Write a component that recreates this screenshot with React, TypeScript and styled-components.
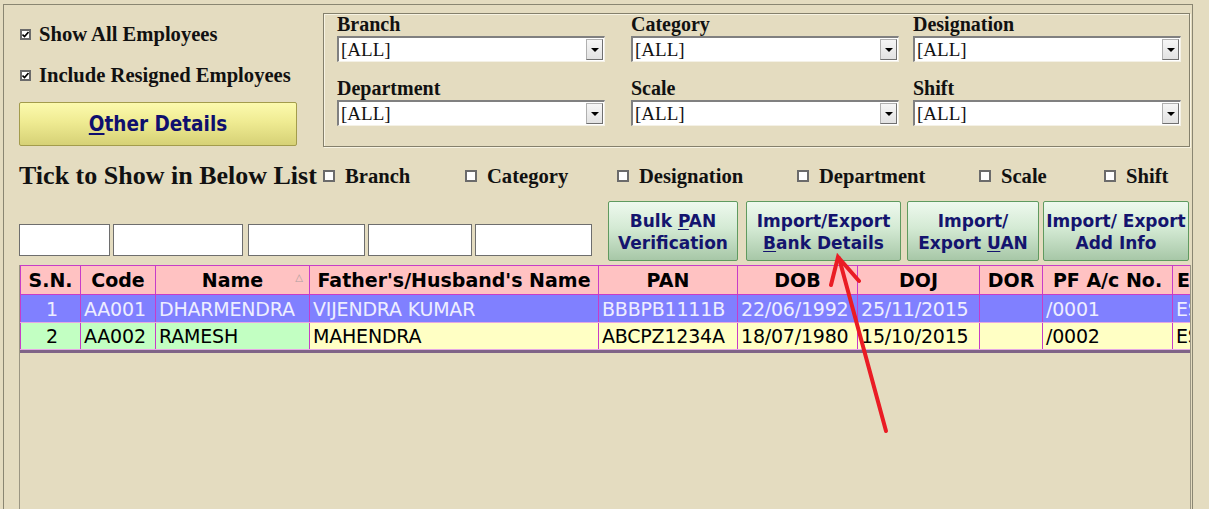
import React from "react";
import styled, { createGlobalStyle } from "styled-components";

const GlobalStyle = createGlobalStyle`
  html, body { margin: 0; padding: 0; background: #e4dcc0; overflow: hidden; }
  * { box-sizing: border-box; }
`;

const Page = styled.div`
  position: relative;
  width: 1209px;
  height: 509px;
  overflow: hidden;
  background: #e4dcc0;
`;

const Frame = styled.div`
  margin: 4px 0 0 3px;
  width: 1190px;
  height: 520px;
  border: 1px solid #8a8672;
  border-bottom: none;
`;

const TopSection = styled.div`
  display: flex;
  align-items: flex-start;
  padding-top: 8px;
`;

const LeftColumn = styled.div`
  margin-left: 15px;
  width: 278px;
  padding-top: 10px;
  display: flex;
  flex-direction: column;
`;

const CheckRow = styled.label<{ $gap?: number }>`
  display: flex;
  align-items: center;
  height: 22px;
  margin-top: ${(p) => p.$gap ?? 0}px;
  font-family: "Liberation Serif", "Times New Roman", serif;
  font-weight: bold;
  font-size: 20.6px;
  color: #111;
  white-space: nowrap;
`;

const Box = styled.span<{ $size?: number }>`
  display: inline-flex;
  align-items: center;
  justify-content: center;
  width: ${(p) => p.$size ?? 11}px;
  height: ${(p) => p.$size ?? 11}px;
  border: 2px solid #6b6b6b;
  background: #ffffff;
  margin-left: 1px;
  margin-right: 8px;
  flex-shrink: 0;
`;

const YellowButton = styled.button`
  margin-top: 16px;
  width: 278px;
  height: 44px;
  border: 1px solid #a39c4c;
  border-radius: 2px;
  background: linear-gradient(#fcfaae, #efeb92 45%, #d6d176);
  font-family: "DejaVu Sans Condensed", "DejaVu Sans", sans-serif;
  font-weight: bold;
  font-size: 20.5px;
  color: #0f0f6e;
  padding: 0;
  u { text-decoration: underline; text-underline-offset: 2px; }
`;

const GroupBox = styled.div`
  margin-left: 26px;
  width: 867px;
  height: 134px;
  border: 1px solid #84806c;
  box-shadow: inset 1px 1px 0 #f7f3e2, 1px 1px 0 #f7f3e2;
  padding: 0 0 0 13px;
  display: grid;
  grid-template-columns: 294px 282px 268px;
  grid-auto-rows: 48px;
  row-gap: 16px;
`;

const Field = styled.div`
  display: flex;
  flex-direction: column;
`;

const FieldLabel = styled.div`
  height: 22px;
  line-height: 20px;
  font-family: "Liberation Serif", "Times New Roman", serif;
  font-weight: bold;
  font-size: 20px;
  color: #111;
`;

const SelectBox = styled.div`
  position: relative;
  width: 268px;
  height: 26px;
  background: #fff;
  border-top: 2px solid #808080;
  border-left: 2px solid #808080;
  border-bottom: 1px solid #f4f1e6;
  border-right: 1px solid #f4f1e6;
  font-family: "Liberation Serif", "Times New Roman", serif;
  font-size: 19px;
  line-height: 23px;
  padding-left: 2px;
  color: #111;
`;

const DropButton = styled.span`
  position: absolute;
  right: 1px;
  top: 1px;
  width: 17px;
  height: 21px;
  background: linear-gradient(#f6f6f6, #e2e2e2);
  border: 1px solid #b0b0b0;
  border-right-color: #707070;
  border-bottom-color: #707070;
  display: flex;
  align-items: center;
  justify-content: center;
  &::after {
    content: "";
    border-left: 4px solid transparent;
    border-right: 4px solid transparent;
    border-top: 4px solid #000;
  }
`;

const TickRow = styled.div`
  display: grid;
  grid-template-columns: 304px 142px 152px 180px 182px 125px 80px;
  align-items: center;
  height: 28px;
  margin-top: 14px;
  padding-left: 15px;
`;

const TickTitle = styled.div`
  font-family: "Liberation Serif", "Times New Roman", serif;
  font-weight: bold;
  font-size: 26px;
  color: #111;
  white-space: nowrap;
`;

const TickItem = styled.label`
  display: flex;
  align-items: center;
  font-family: "Liberation Serif", "Times New Roman", serif;
  font-weight: bold;
  font-size: 20.6px;
  color: #111;
  white-space: nowrap;
  ${Box} { margin-left: 0; margin-right: 10px; width: 12px; height: 12px; }
`;

const ActionRow = styled.div`
  display: flex;
  align-items: flex-end;
  height: 60px;
  margin-top: 12px;
  padding-left: 15px;
`;

const Inputs = styled.div`
  display: flex;
  margin-bottom: 5px;
`;

const TextInput = styled.div<{ $w: number; $gap: number }>`
  width: ${(p) => p.$w}px;
  height: 32px;
  margin-left: ${(p) => p.$gap}px;
  background: #fff;
  border: 1px solid #6e6e6e;
`;

const Buttons = styled.div`
  display: flex;
  height: 60px;
  margin-left: 16px;
`;

const GreenButton = styled.button<{ $w: number; $gap: number }>`
  width: ${(p) => p.$w}px;
  height: 60px;
  margin-left: ${(p) => p.$gap}px;
  border: 1px solid #5f9a5f;
  border-radius: 2px;
  background: linear-gradient(#eef9ee, #d4ead4 45%, #a7c7a7);
  font-family: "DejaVu Sans", sans-serif;
  font-weight: bold;
  font-size: 17px;
  line-height: 22px;
  color: #14146e;
  padding: 2px 0 0;
  white-space: nowrap;
  u { text-decoration: underline; text-underline-offset: 2px; }
`;

const GridBox = styled.div`
  margin-top: 4px;
  margin-left: 15px;
  width: 1172px;
  height: 260px;
  border-left: 1px solid #9b9683;
  border-right: 1px solid #9b9683;
  overflow: hidden;
`;

const Table = styled.table`
  border-collapse: collapse;
  table-layout: fixed;
  width: 1251px;
  font-family: "DejaVu Sans", sans-serif;
  font-size: 19px;
`;

const HeadCell = styled.th<{ $left?: boolean }>`
  height: 29px;
  padding: 0 0 0 ${(p) => (p.$left ? 4 : 0)}px;
  background: #ffc2c2;
  border: 1px solid #c83cc8;
  font-weight: bold;
  color: #000;
  text-align: ${(p) => (p.$left ? "left" : "center")};
  white-space: nowrap;
  overflow: hidden;
  position: relative;
`;

const SortMark = styled.span`
  position: absolute;
  right: 6px;
  top: 6px;
  font-size: 10px;
  color: #b0a0a0;
  font-weight: normal;
`;

const Row = styled.tr<{ $bg: string; $fg: string; $lead?: string; $h: number }>`
  height: ${(p) => p.$h}px;
  td {
    background: ${(p) => p.$bg};
    color: ${(p) => p.$fg};
  }
  td:nth-child(-n + 3) {
    background: ${(p) => p.$lead ?? p.$bg};
  }
`;

const Cell = styled.td<{ $center?: boolean }>`
  padding: 0 0 0 3px;
  border-left: 1px solid #c83cc8;
  border-right: 1px solid #c83cc8;
  border-bottom: 1px solid #e4a8e4;
  text-align: ${(p) => (p.$center ? "center" : "left")};
  white-space: nowrap;
  overflow: hidden;
  line-height: 26px;
  letter-spacing: -0.2px;
`;

const TableEnd = styled.div`
  width: 1172px;
  height: 3px;
  background: #7f6487;
`;

const ArrowOverlay = styled.svg`
  position: absolute;
  left: 0;
  top: 0;
  pointer-events: none;
`;

const CheckMark = () => (
  <svg width="7" height="7" viewBox="0 0 7 7">
    <path d="M0.5 3.5 L2.5 5.5 L6.5 1" stroke="#000" strokeWidth="1.6" fill="none" />
  </svg>
);

const cols = [60, 75, 154, 289, 139, 120, 122, 63, 130, 99];
const headers = ["S.N.", "Code", "Name", "Father's/Husband's Name", "PAN", "DOB", "DOJ", "DOR", "PF A/c No.", "ESI No."];

const rows = [
  { sn: "1", code: "AA001", name: "DHARMENDRA", father: "VIJENDRA KUMAR", pan: "BBBPB1111B", dob: "22/06/1992", doj: "25/11/2015", dor: "", pf: "/0001", esi: "ESI001" },
  { sn: "2", code: "AA002", name: "RAMESH", father: "MAHENDRA", pan: "ABCPZ1234A", dob: "18/07/1980", doj: "15/10/2015", dor: "", pf: "/0002", esi: "ESI002" },
];

const fields = ["Branch", "Category", "Designation", "Department", "Scale", "Shift"];
const inputs = [
  { w: 91, gap: 0 },
  { w: 130, gap: 3 },
  { w: 117, gap: 5 },
  { w: 104, gap: 3 },
  { w: 117, gap: 3 },
];

export default function App() {
  return (
    <Page>
      <GlobalStyle />
      <Frame>
        <TopSection>
          <LeftColumn>
            <CheckRow>
              <Box><CheckMark /></Box>Show All Employees
            </CheckRow>
            <CheckRow $gap={19}>
              <Box><CheckMark /></Box>Include Resigned Employees
            </CheckRow>
            <YellowButton>
              <u>O</u>ther Details
            </YellowButton>
          </LeftColumn>
          <GroupBox>
            {fields.map((f) => (
              <Field key={f}>
                <FieldLabel>{f}</FieldLabel>
                <SelectBox>
                  [ALL]
                  <DropButton />
                </SelectBox>
              </Field>
            ))}
          </GroupBox>
        </TopSection>
        <TickRow>
          <TickTitle>Tick to Show in Below List</TickTitle>
          {fields.map((f) => (
            <TickItem key={f}>
              <Box />
              {f}
            </TickItem>
          ))}
        </TickRow>
        <ActionRow>
          <Inputs>
            {inputs.map((i, k) => (
              <TextInput key={k} $w={i.w} $gap={i.gap} />
            ))}
          </Inputs>
          <Buttons>
            <GreenButton $w={130} $gap={0}>
              Bulk <u>P</u>AN<br />Verification
            </GreenButton>
            <GreenButton $w={155} $gap={8}>
              Import/Export<br /><u>B</u>ank Details
            </GreenButton>
            <GreenButton $w={132} $gap={6}>
              Import/<br />Export <u>U</u>AN
            </GreenButton>
            <GreenButton $w={146} $gap={4}>
              Import/ Export<br />Add Info
            </GreenButton>
          </Buttons>
        </ActionRow>
        <GridBox>
          <Table>
            <colgroup>
              {cols.map((w, i) => (
                <col key={i} style={{ width: w }} />
              ))}
            </colgroup>
            <thead>
              <tr>
                {headers.map((h, i) => (
                  <HeadCell key={h} $left={i === headers.length - 1}>
                    {h}
                    {h === "Name" && <SortMark>△</SortMark>}
                  </HeadCell>
                ))}
              </tr>
            </thead>
            <tbody>
              {rows.map((r, i) => (
                <Row
                  key={r.sn}
                  $h={i === 0 ? 28 : 27}
                  $bg={i === 0 ? "#8080ff" : "#ffffc4"}
                  $fg={i === 0 ? "#eeeeff" : "#000"}
                  $lead={i === 0 ? undefined : "#c2ffc2"}
                >
                  <Cell $center>{r.sn}</Cell>
                  <Cell>{r.code}</Cell>
                  <Cell>{r.name}</Cell>
                  <Cell>{r.father}</Cell>
                  <Cell>{r.pan}</Cell>
                  <Cell>{r.dob}</Cell>
                  <Cell>{r.doj}</Cell>
                  <Cell>{r.dor}</Cell>
                  <Cell>{r.pf}</Cell>
                  <Cell>{r.esi}</Cell>
                </Row>
              ))}
            </tbody>
          </Table>
          <TableEnd />
        </GridBox>
      </Frame>
      <ArrowOverlay width="1209" height="509" viewBox="0 0 1209 509">
        <g stroke="#ea1c24" strokeWidth="4" strokeLinecap="round" fill="none">
          <path d="M886 431 L839 258" />
          <path d="M831 285 L838 257 L859 281" />
        </g>
      </ArrowOverlay>
    </Page>
  );
}
